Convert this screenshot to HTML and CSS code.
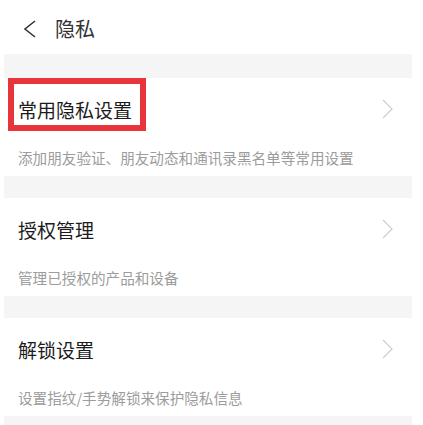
FILE: index.html
```html
<!DOCTYPE html>
<html lang="zh-CN">
<head>
<meta charset="utf-8">
<link rel="stylesheet" href="styles.css">
</head>
<body>
<div class="page">
  <header class="topbar">
    <svg class="back" width="16" height="18" viewBox="0 0 16 18"><path d="M13 1 L3 9 L13 17" fill="none" stroke="#333" stroke-width="1.6"/></svg>
    <span class="topbar-title">隐私</span>
  </header>
  <div class="list">
    <section class="item">
      <div class="item-head">
        <span class="item-title">常用隐私设置</span>
        <svg class="chev" width="12" height="20" viewBox="0 0 12 20"><path d="M1 1 L10 10 L1 19" fill="none" stroke="#cfcfcf" stroke-width="1.3"/></svg>
        <span class="highlight"></span>
      </div>
      <div class="item-sub">添加朋友验证、朋友动态和通讯录黑名单等常用设置</div>
    </section>
    <section class="item">
      <div class="item-head">
        <span class="item-title">授权管理</span>
        <svg class="chev" width="12" height="20" viewBox="0 0 12 20"><path d="M1 1 L10 10 L1 19" fill="none" stroke="#cfcfcf" stroke-width="1.3"/></svg>
      </div>
      <div class="item-sub">管理已授权的产品和设备</div>
    </section>
    <section class="item">
      <div class="item-head">
        <span class="item-title">解锁设置</span>
        <svg class="chev" width="12" height="20" viewBox="0 0 12 20"><path d="M1 1 L10 10 L1 19" fill="none" stroke="#cfcfcf" stroke-width="1.3"/></svg>
      </div>
      <div class="item-sub">设置指纹/手势解锁来保护隐私信息</div>
    </section>
  </div>
</div>
</body>
</html>
```
FILE: styles.css
```css
html, body {
  margin: 0;
  padding: 0;
  background: #ffffff;
}
body {
  font-family: "Noto Sans CJK SC", "Noto Sans", sans-serif;
  width: 423px;
  height: 425px;
  overflow: hidden;
}
.page {
  display: flex;
  flex-direction: column;
}
.topbar {
  height: 54px;
  display: flex;
  align-items: center;
  padding-left: 22px;
  gap: 17px;
  box-sizing: border-box;
  padding-top: 4px;
}
.back {
  display: block;
}
.topbar-title {
  font-size: 20px;
  color: #333333;
  line-height: 1;
}
.list {
  margin: 0 11px 0 4px;
  background: #f5f5f5;
  padding-top: 24px;
  display: flex;
  flex-direction: column;
  gap: 22px;
  padding-bottom: 20px;
}
.item {
  background: #ffffff;
  height: 98px;
  display: flex;
  flex-direction: column;
}
.item-head {
  position: relative;
  height: 62px;
  display: flex;
  align-items: center;
  justify-content: space-between;
  padding: 0 18px 0 14px;
}
.item-title {
  font-size: 19px;
  color: #1c1c1c;
  line-height: 1;
}
.chev {
  display: block;
}
.highlight {
  position: absolute;
  left: 4px;
  top: 0;
  width: 138px;
  height: 53px;
  border: 6px solid #e8353b;
  box-sizing: border-box;
}
.item-sub {
  height: 36px;
  display: flex;
  align-items: center;
  padding-left: 14px;
  font-size: 14.6px;
  color: #9c9c9c;
  line-height: 1;
}
```
